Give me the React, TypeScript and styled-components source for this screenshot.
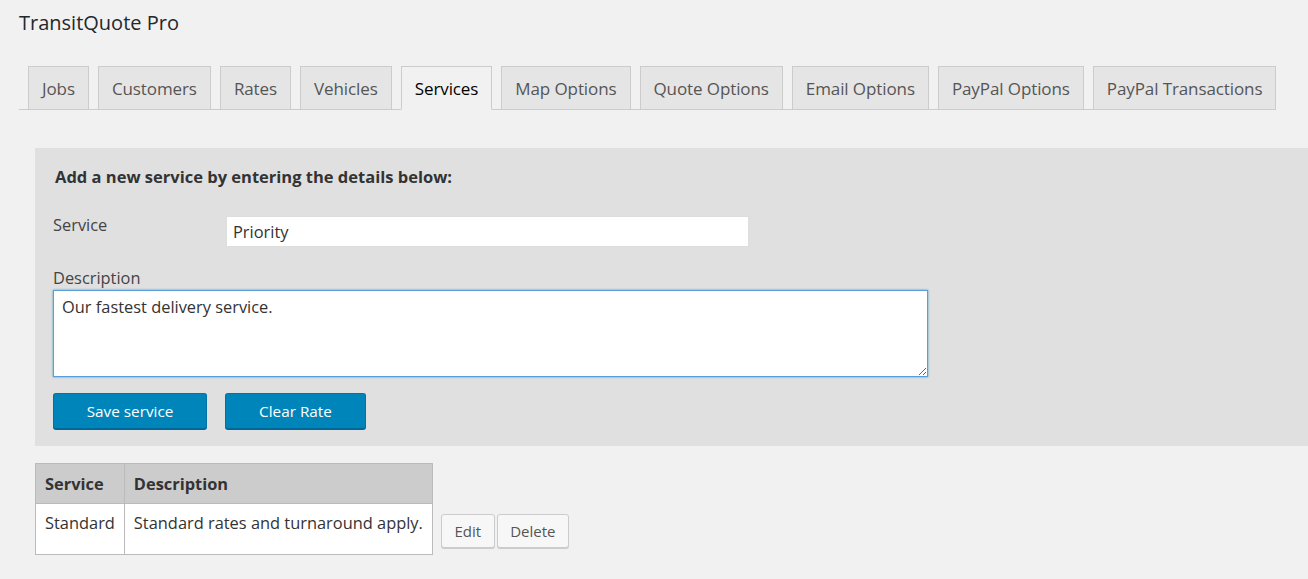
import React, { FC } from 'react';
import styled, { createGlobalStyle } from 'styled-components';

const FONT = '"Open Sans", "Noto Sans", sans-serif';

const TABS = [
  'Jobs',
  'Customers',
  'Rates',
  'Vehicles',
  'Services',
  'Map Options',
  'Quote Options',
  'Email Options',
  'PayPal Options',
  'PayPal Transactions',
];

const SERVICES = [
  { name: 'Standard', description: 'Standard rates and turnaround apply.' },
];

const GlobalStyle = createGlobalStyle`
  html, body {
    margin: 0;
    background: #f1f1f1;
    font-family: ${FONT};
    color: #23282d;
  }
  * { box-sizing: border-box; }
`;

const Page = styled.div`
  padding: 9px 0 0 19px;
  width: 1308px;
  overflow: hidden;
  min-height: 579px;
`;

const Title = styled.h1`
  margin: 0;
  font-size: 20px;
  font-weight: 400;
  line-height: 28px;
  color: #23282d;
`;

const TabBar = styled.nav`
  display: flex;
  gap: 9px;
  width: fit-content;
  margin-top: 29px;
  padding-left: 9px;
  border-bottom: 1px solid #ccc;
`;

const Tab = styled.a<{ $active?: boolean }>`
  display: flex;
  align-items: center;
  height: 44px;
  padding: 0 13px;
  margin-bottom: -1px;
  border: 1px solid #ccc;
  border-bottom: 1px solid ${({ $active }) => ($active ? '#f1f1f1' : '#ccc')};
  background: ${({ $active }) => ($active ? '#f1f1f1' : '#e5e5e5')};
  color: ${({ $active }) => ($active ? '#000' : '#555')};
  font-size: 17px;
  font-weight: 500;
  letter-spacing: -0.1px;
  white-space: nowrap;
  cursor: pointer;
`;

const Panel = styled.section`
  margin: 38px 0 0 16px;
  padding: 17px 0 17px 18px;
  background: #e0e0e0;
`;

const Heading = styled.h3`
  margin: 0 0 25px 2px;
  font-size: 16.5px;
  font-weight: 700;
  line-height: 24px;
  color: #333;
`;

const FieldRow = styled.div`
  display: flex;
  align-items: flex-start;
`;

const Label = styled.label<{ $width?: number }>`
  display: block;
  width: ${({ $width }) => ($width ? `${$width}px` : 'auto')};
  font-size: 16.4px;
  line-height: 22px;
  color: #444;
`;

const TextInput = styled.input`
  width: 523px;
  height: 31px;
  margin-top: 2px;
  padding: 0 6px;
  border: 1px solid #ddd;
  background: #fff;
  font-family: ${FONT};
  font-size: 16.4px;
  color: #333;
  outline: none;
`;

const DescriptionBlock = styled.div`
  margin-top: 20px;
`;

const TextArea = styled.textarea`
  display: block;
  width: 875px;
  height: 87px;
  margin-top: 1px;
  padding: 4px 8px;
  border: 1px solid #5b9dd9;
  box-shadow: 0 0 2px rgba(30, 140, 190, 0.8);
  background: #fff;
  font-family: ${FONT};
  font-size: 16.4px;
  line-height: 24px;
  color: #333;
  outline: none;
  resize: both;
`;

const ButtonRow = styled.div`
  display: flex;
  gap: 18px;
  margin-top: 16px;
`;

const PrimaryButton = styled.button<{ $width: number }>`
  width: ${({ $width }) => $width}px;
  height: 36px;
  border: 1px solid #0073aa;
  border-bottom-color: #006799;
  border-radius: 3px;
  background: #0085ba;
  box-shadow: 0 1px 0 #006799;
  color: #fff;
  font-family: ${FONT};
  font-size: 15.3px;
  cursor: pointer;
`;

const ListArea = styled.div`
  display: flex;
  align-items: flex-end;
  margin: 17px 0 0 16px;
`;

const Table = styled.table`
  border-collapse: collapse;
  background: #fff;
  border: 1px solid #bbb;
  font-size: 16.4px;
  color: #333;
`;

const Th = styled.th<{ $width: number }>`
  width: ${({ $width }) => $width}px;
  height: 40px;
  padding: 0 9px;
  background: #cccccc;
  border: 1px solid #bbb;
  text-align: left;
  font-weight: 700;
  color: #333;
  white-space: nowrap;
`;

const Td = styled.td`
  height: 51px;
  padding: 7px 9px 0;
  vertical-align: top;
  border: 1px solid #bbb;
  line-height: 24px;
  white-space: nowrap;
`;

const RowActions = styled.div`
  display: flex;
  gap: 2px;
  margin: 0 0 7px 8px;
`;

const SecondaryButton = styled.button<{ $width: number }>`
  width: ${({ $width }) => $width}px;
  height: 34px;
  border: 1px solid #ccc;
  border-radius: 3px;
  background: #f7f7f7;
  box-shadow: 0 1px 0 #ccc;
  color: #555;
  font-family: ${FONT};
  font-size: 15px;
  cursor: pointer;
`;

const App: FC = () => (
  <>
    <GlobalStyle />
    <Page>
      <Title>TransitQuote Pro</Title>
      <TabBar>
        {TABS.map((tab) => (
          <Tab key={tab} $active={tab === 'Services'}>{tab}</Tab>
        ))}
      </TabBar>

      <Panel>
        <Heading>Add a new service by entering the details below:</Heading>
        <FieldRow>
          <Label $width={173}>Service</Label>
          <TextInput defaultValue="Priority" />
        </FieldRow>
        <DescriptionBlock>
          <Label>Description</Label>
          <TextArea defaultValue="Our fastest delivery service." />
        </DescriptionBlock>
        <ButtonRow>
          <PrimaryButton $width={154}>Save service</PrimaryButton>
          <PrimaryButton $width={141}>Clear Rate</PrimaryButton>
        </ButtonRow>
      </Panel>

      <ListArea>
        <Table>
          <thead>
            <tr>
              <Th $width={88}>Service</Th>
              <Th $width={307}>Description</Th>
            </tr>
          </thead>
          <tbody>
            {SERVICES.map((s) => (
              <tr key={s.name}>
                <Td>{s.name}</Td>
                <Td>{s.description}</Td>
              </tr>
            ))}
          </tbody>
        </Table>
        <RowActions>
          <SecondaryButton $width={54}>Edit</SecondaryButton>
          <SecondaryButton $width={72}>Delete</SecondaryButton>
        </RowActions>
      </ListArea>
    </Page>
  </>
);

export default App;
